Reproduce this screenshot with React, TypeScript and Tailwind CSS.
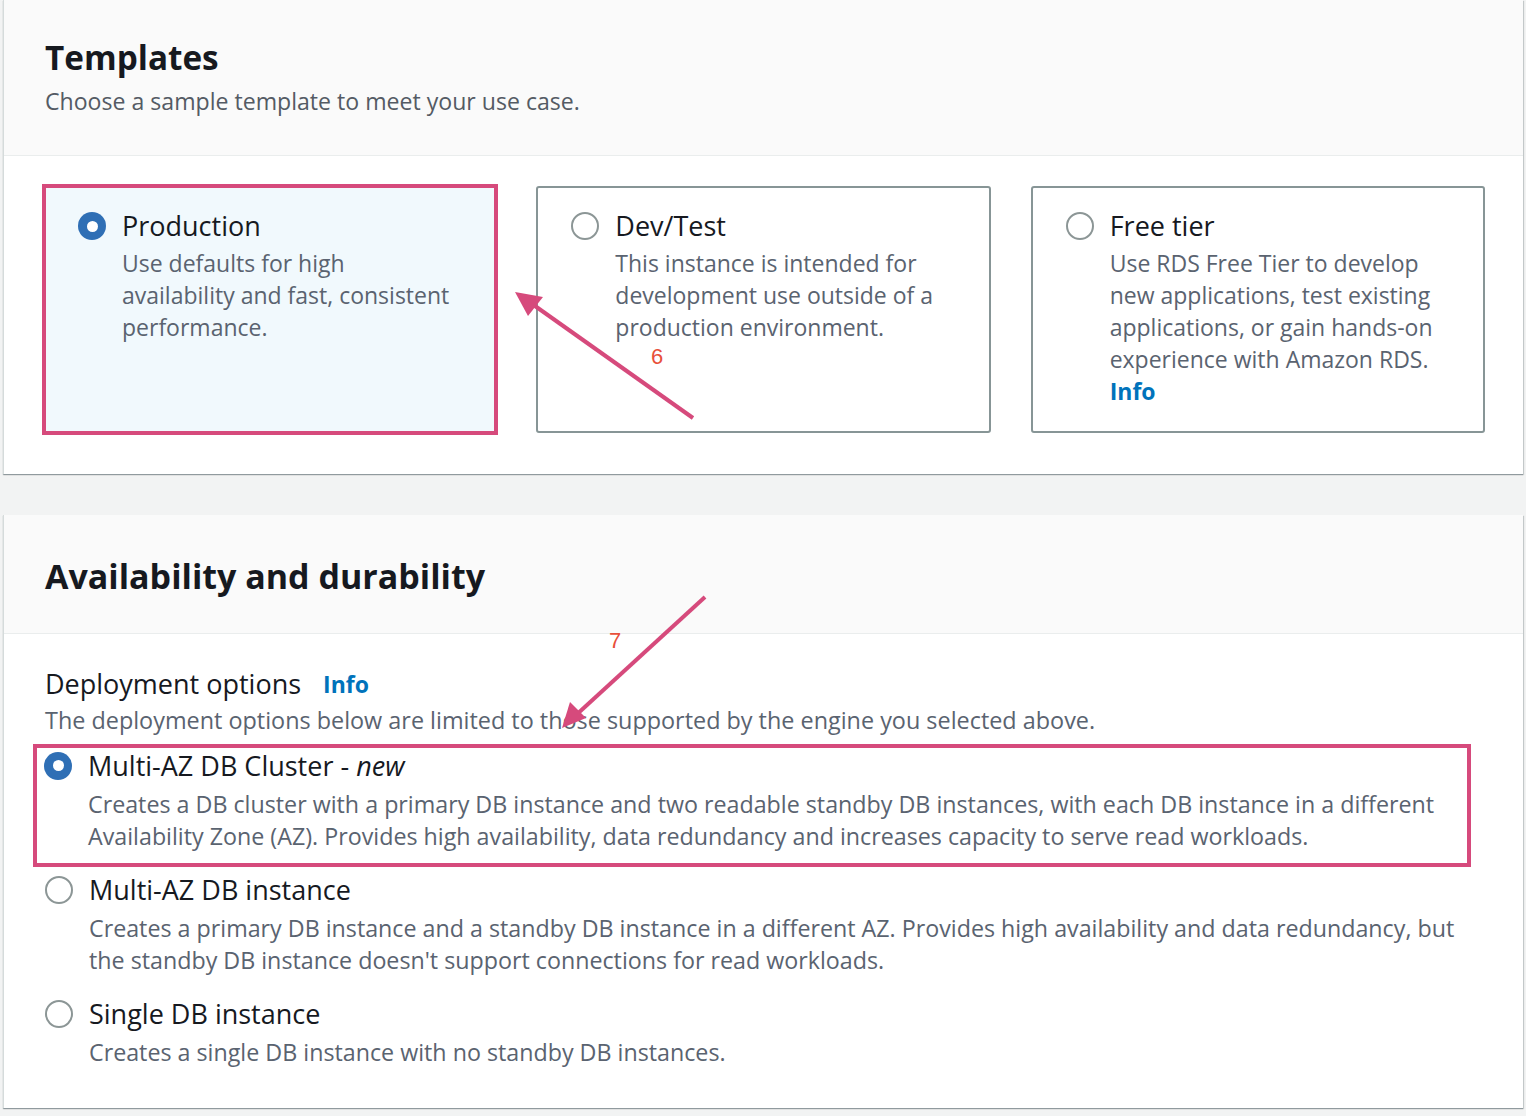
import { ReactNode } from "react";

const font = { fontFamily: '"Open Sans", "Liberation Sans", sans-serif' };

function Radio({ checked }: { checked?: boolean }) {
  if (checked) {
    return (
      <span className="flex h-[28px] w-[28px] shrink-0 items-center justify-center rounded-full bg-[#2f6fb5]">
        <span className="h-[11px] w-[11px] rounded-full bg-white" />
      </span>
    );
  }
  return <span className="h-[28px] w-[28px] shrink-0 rounded-full border-2 border-[#8c9696] bg-white" />;
}

function Card({
  title,
  checked,
  children,
}: {
  title: string;
  checked?: boolean;
  children: ReactNode;
}) {
  return (
    <div
      className={
        checked
          ? "-my-[2px] -mr-[2px] border-4 border-[#d64a7c] bg-[#f1f9fd] pl-[32px] pr-[36px] pt-[21px]"
          : "rounded-[3px] border-2 border-[#879596] bg-white pl-[33px] pr-[30px] pt-[21px]"
      }
    >
      <div className="flex items-center gap-4">
        <Radio checked={checked} />
        <div className="text-[27px] leading-[34px] text-[#16191f]">{title}</div>
      </div>
      <div className="mt-[4px] pl-[44px] text-[23px] leading-[32px] text-[#5a6370]">{children}</div>
    </div>
  );
}

function Option({
  title,
  desc,
  checked,
}: {
  title: ReactNode;
  desc: string;
  checked?: boolean;
}) {
  return (
    <div>
      <div className="flex items-center gap-4">
        <Radio checked={checked} />
        <div className="text-[27px] leading-[34px] text-[#16191f]">{title}</div>
      </div>
      <div className="mt-[5px] pl-[44px] text-[23.25px] leading-[32px] text-[#5a6370]">{desc}</div>
    </div>
  );
}

export default function App() {
  return (
    <div className="relative min-h-[1116px] w-[1526px] bg-[#f2f3f3]" style={font}>
      <div className="ml-[3px] w-[1520px] border-l border-[#d5dbdb] bg-white shadow-[0_1px_1px_0_rgba(0,28,36,0.3),1px_1px_1px_0_rgba(0,28,36,0.15)]">
        <div className="h-[156px] border-b border-[#eaeded] bg-[#fafafa] px-[41px] pt-[36px]">
          <h2 className="text-[33.3px] font-bold leading-[42px] text-[#16191f]">Templates</h2>
          <p className="mt-[8px] text-[23.1px] leading-[30px] text-[#545b64]">
            Choose a sample template to meet your use case.
          </p>
        </div>
        <div className="grid h-[318px] grid-cols-3 gap-10 px-[38px] pb-[41px] pt-[30px]">
          <Card title="Production" checked>
            Use defaults for high availability and fast, consistent performance.
          </Card>
          <Card title="Dev/Test">
            This instance is intended for development use outside of a production environment.
          </Card>
          <Card title="Free tier">
            Use RDS Free Tier to develop new applications, test existing applications, or gain hands-on
            experience with Amazon RDS.
            <div className="font-bold text-[#0073bb]">Info</div>
          </Card>
        </div>
      </div>

      <div className="ml-[3px] mt-[41px] w-[1520px] border-l border-[#d5dbdb] bg-white shadow-[0_1px_1px_0_rgba(0,28,36,0.3),1px_1px_1px_0_rgba(0,28,36,0.15)]">
        <div className="flex h-[119px] items-center border-b border-[#eaeded] bg-[#fafafa] px-[41px] pt-[4px]">
          <h2 className="text-[34px] font-bold leading-[44px] text-[#16191f]">Availability and durability</h2>
        </div>
        <div className="px-[41px] pb-[40px] pt-[33px]">
          <div className="flex items-center gap-[22px]">
            <span className="text-[27px] leading-[34px] text-[#16191f]">Deployment options</span>
            <span className="text-[23px] font-bold text-[#0073bb]">Info</span>
          </div>
          <p className="mt-[2px] text-[23.4px] leading-[32px] text-[#5a6370]">
            The deployment options below are limited to those supported by the engine you selected above.
          </p>
          <div className="-ml-[12px] mt-[8px] w-[1438px] border-4 border-[#d64a7c] pb-[11px] pl-[7px] pt-[1px]">
            <Option
              checked
              title={
                <>
                  Multi-AZ DB Cluster - <i>new</i>
                </>
              }
              desc="Creates a DB cluster with a primary DB instance and two readable standby DB instances, with each DB instance in a different Availability Zone (AZ). Provides high availability, data redundancy and increases capacity to serve read workloads."
            />
          </div>
          <div className="mt-[6px]">
            <Option
              title="Multi-AZ DB instance"
              desc="Creates a primary DB instance and a standby DB instance in a different AZ. Provides high availability and data redundancy, but the standby DB instance doesn't support connections for read workloads."
            />
          </div>
          <div className="mt-[21px]">
            <Option title="Single DB instance" desc="Creates a single DB instance with no standby DB instances." />
          </div>
        </div>
      </div>

      <svg className="pointer-events-none absolute left-0 top-0" width="1526" height="1116">
        <line x1="693" y1="418" x2="528" y2="301" stroke="#d64a7c" strokeWidth="4" />
        <polygon points="515,292 543,297 528,316" fill="#d64a7c" />
        <line x1="705" y1="597" x2="575" y2="716" stroke="#d64a7c" strokeWidth="4" />
        <polygon points="562,728 570,702 586,718" fill="#d64a7c" />
        <text x="651" y="364" fontSize="22" fill="#e8503a" fontFamily="Liberation Sans, sans-serif">6</text>
        <text x="609" y="648" fontSize="22" fill="#e8503a" fontFamily="Liberation Sans, sans-serif">7</text>
      </svg>
    </div>
  );
}
